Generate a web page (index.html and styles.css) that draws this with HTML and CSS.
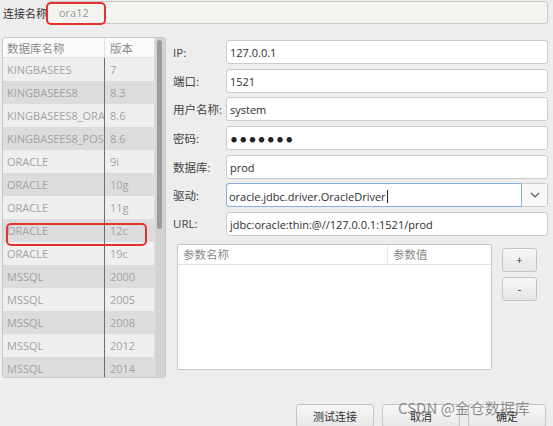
FILE: index.html
```html
<!DOCTYPE html>
<html lang="zh-CN">
<head>
    <meta charset="UTF-8">
    <title>连接配置</title>
    <link rel="stylesheet" href="styles.css">
</head>
<body>

<div class="dialog">
    <!-- Connection name -->
    <div class="name-row">
        <label class="name-label">连接名称</label>
        <div class="name-input">ora12</div>
        <span class="mark mark-name"></span>
    </div>

    <div class="main">
        <!-- Database type list -->
        <div class="db-list">
            <div class="db-rows">
                <div class="db-head">
                    <span class="col-name">数据库名称</span>
                    <span class="col-ver">版本</span>
                </div>
                <div class="db-row"><span class="col-name">KINGBASEES</span><span class="col-ver">7</span></div>
                <div class="db-row"><span class="col-name">KINGBASEES8</span><span class="col-ver">8.3</span></div>
                <div class="db-row"><span class="col-name">KINGBASEES8_ORACLE</span><span class="col-ver">8.6</span></div>
                <div class="db-row"><span class="col-name">KINGBASEES8_POSTGRES</span><span class="col-ver">8.6</span></div>
                <div class="db-row"><span class="col-name">ORACLE</span><span class="col-ver">9i</span></div>
                <div class="db-row"><span class="col-name">ORACLE</span><span class="col-ver">10g</span></div>
                <div class="db-row"><span class="col-name">ORACLE</span><span class="col-ver">11g</span></div>
                <div class="db-row selected"><span class="col-name">ORACLE</span><span class="col-ver">12c</span></div>
                <div class="db-row"><span class="col-name">ORACLE</span><span class="col-ver">19c</span></div>
                <div class="db-row"><span class="col-name">MSSQL</span><span class="col-ver">2000</span></div>
                <div class="db-row"><span class="col-name">MSSQL</span><span class="col-ver">2005</span></div>
                <div class="db-row"><span class="col-name">MSSQL</span><span class="col-ver">2008</span></div>
                <div class="db-row"><span class="col-name">MSSQL</span><span class="col-ver">2012</span></div>
                <div class="db-row"><span class="col-name">MSSQL</span><span class="col-ver">2014</span></div>
            </div>
            <div class="scrollbar"><div class="thumb"></div></div>
            <span class="mark mark-row"></span>
        </div>

        <!-- Connection form -->
        <div class="form">
            <div class="field"><label>IP:</label><div class="input">127.0.0.1</div></div>
            <div class="field"><label>端口:</label><div class="input">1521</div></div>
            <div class="field"><label>用户名称:</label><div class="input">system</div></div>
            <div class="field"><label>密码:</label><div class="input password">●●●●●●●</div></div>
            <div class="field"><label>数据库:</label><div class="input">prod</div></div>
            <div class="field">
                <label>驱动:</label>
                <div class="combo">
                    <div class="combo-text">oracle.jdbc.driver.OracleDriver<span class="caret"></span></div>
                    <div class="combo-btn">
                        <svg width="10" height="6" viewBox="0 0 10 6"><path d="M1 1 L5 5 L9 1" fill="none" stroke="#555" stroke-width="1.2"/></svg>
                    </div>
                </div>
            </div>
            <div class="field"><label>URL:</label><div class="input">jdbc:oracle:thin:@//127.0.0.1:1521/prod</div></div>

            <div class="params">
                <div class="param-table">
                    <div class="param-head">
                        <span class="param-name">参数名称</span>
                        <span class="param-val">参数值</span>
                    </div>
                </div>
                <div class="param-btns">
                    <button class="btn small">+</button>
                    <button class="btn small">-</button>
                </div>
            </div>
        </div>
    </div>

    <div class="footer">
        <button class="btn">测试连接</button>
        <button class="btn">取消</button>
        <button class="btn">确定</button>
    </div>

    <div class="watermark">CSDN @金仓数据库</div>
</div>

</body>
</html>
```

FILE: styles.css
```css
/* --- Base --- */
body {
    margin: 0;
    background-color: #ededed;
    font-family: "Open Sans", "Noto Sans CJK SC", sans-serif;
    font-size: 11px;
    color: #3c3c3c;
}

.dialog {
    position: relative;
    width: 553px;
    height: 426px;
    overflow: hidden;
}

/* --- Red annotation boxes --- */
.mark {
    position: absolute;
    border: 2px solid #e5322d;
    border-radius: 5px;
    box-sizing: border-box;
}

.mark-name {
    left: 46px;
    top: 2px;
    width: 60px;
    height: 23px;
}

.mark-row {
    left: 3px;
    top: 185px;
    width: 141px;
    height: 23px;
}

/* --- Connection name row --- */
.name-row {
    position: relative;
    display: flex;
    align-items: center;
    padding: 1px 5px 0 3px;
    height: 23px;
}

.name-label {
    width: 44px;
    font-size: 11px;
    color: #333;
}

.name-input {
    flex: 1;
    height: 23px;
    box-sizing: border-box;
    background-color: #f3f3ef;
    border: 1px solid #c9c9c9;
    border-radius: 3px;
    padding: 3px 11px;
    color: #999;
    font-size: 11px;
}

/* --- Main area --- */
.main {
    display: flex;
    margin-top: 13px;
    padding-left: 2px;
    height: 341px;
}

/* --- Database list --- */
.db-list {
    position: relative;
    display: flex;
    width: 164px;
    height: 341px;
    box-sizing: border-box;
    border: 1px solid #c8c8c8;
    border-radius: 3px;
    overflow: hidden;
    background-color: #efefef;
}

.db-rows {
    width: 152px;
    overflow: hidden;
}

.db-head,
.db-row {
    display: flex;
    align-items: center;
    white-space: nowrap;
}

.db-head {
    height: 19px;
    background-color: #fafafa;
    border-bottom: 1px solid #e4e4e4;
    color: #8a8a8a;
    font-size: 11.5px;
}

.db-row {
    height: 23px;
    color: #a3a3a3;
    background-color: #efefef;
}

.db-row:nth-child(odd) {
    background-color: #dcdcdc;
}

.col-name {
    width: 97px;
    padding-left: 4px;
    overflow: hidden;
    text-overflow: clip;
    align-self: stretch;
    display: flex;
    align-items: center;
    border-right: 1px solid #6e6e6e;
}

.db-head .col-name {
    border-right: 1px solid #e2e2e2;
}

.col-ver {
    padding-left: 5px;
}

.scrollbar {
    width: 10px;
    background-color: #d3d3d3;
    border-left: 1px solid #e0e0e0;
    padding-top: 2px;
}

.thumb {
    width: 5px;
    height: 189px;
    margin-left: 2px;
    background-color: #9c9c9c;
    border-radius: 3px;
}

/* --- Form --- */
.form {
    display: flex;
    flex-direction: column;
    gap: 4.67px;
    padding: 3px 0 0 7px;
    width: 375px;
}

.field {
    display: flex;
    align-items: center;
    height: 24px;
}

.field label {
    width: 53px;
    font-size: 11.5px;
    color: #444;
}

.input,
.combo {
    width: 322px;
    height: 24px;
    box-sizing: border-box;
    background-color: #fff;
    border: 1px solid #cbcbcb;
    border-radius: 3px;
}

.input {
    padding: 4px 3px;
    color: #2e2e2e;
    white-space: nowrap;
}

.input.password {
    font-size: 6px;
    letter-spacing: 3.2px;
    padding: 8px 0 0 4px;
    color: #222;
}

.combo {
    display: flex;
}

.combo-text {
    flex: 1;
    border: 1px solid #86b1e6;
    border-radius: 3px 0 0 3px;
    margin: -1px 0 -1px -1px;
    padding: 5px 2px;
    color: #2e2e2e;
    white-space: nowrap;
}

.caret {
    display: inline-block;
    width: 1px;
    height: 13px;
    margin-left: 1px;
    vertical-align: -2px;
    background-color: #222;
}

.combo-btn {
    width: 25px;
    display: flex;
    align-items: center;
    justify-content: center;
    background-color: #f7f7f7;
}

/* --- Parameter table --- */
.params {
    display: flex;
    margin-top: 3px;
    padding-left: 4px;
}

.param-table {
    width: 315px;
    height: 126px;
    box-sizing: border-box;
    background-color: #fff;
    border: 1px solid #c8c8c8;
    border-radius: 2px;
}

.param-head {
    display: flex;
    height: 19px;
    align-items: center;
    border-bottom: 1px solid #dedede;
    color: #8a8a8a;
    font-size: 11.5px;
}

.param-name {
    width: 204px;
    padding-left: 5px;
    align-self: stretch;
    display: flex;
    align-items: center;
    border-right: 1px solid #e6e6e6;
}

.param-val {
    padding-left: 5px;
}

.param-btns {
    display: flex;
    flex-direction: column;
    gap: 5px;
    margin: 4px 0 0 10px;
}

/* --- Buttons --- */
.btn {
    width: 78px;
    height: 24px;
    font-family: "Noto Sans CJK SC", "Open Sans", sans-serif;
    font-size: 11px;
    color: #333;
    background: linear-gradient(#f7f7f7, #e6e6e6);
    border: 1px solid #c4c4c4;
    border-radius: 3px;
    padding: 0;
}

.btn.small {
    width: 35px;
    font-family: "Open Sans", sans-serif;
}

.footer {
    display: flex;
    justify-content: flex-end;
    gap: 8px;
    margin-top: 26px;
    padding-right: 7px;
}

.watermark {
    position: absolute;
    left: 398px;
    top: 397px;
    font-family: "Noto Sans CJK SC", sans-serif;
    font-size: 15px;
    color: rgba(110, 110, 110, 0.75);
    white-space: nowrap;
}
```
